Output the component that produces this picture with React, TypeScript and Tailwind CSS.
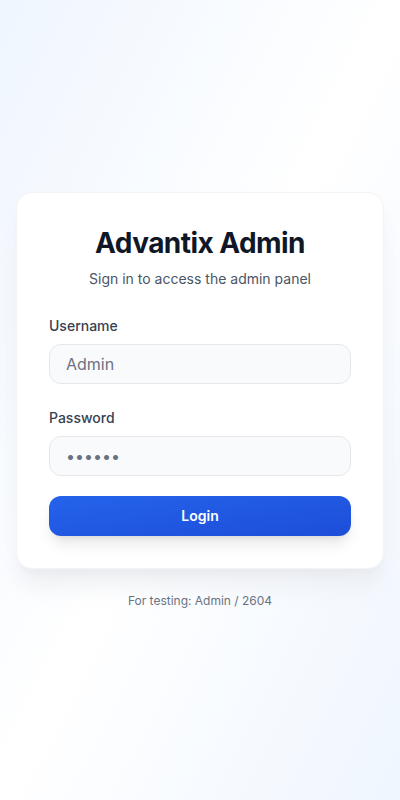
export default function App() {
  return (
    <div
      className="min-h-screen flex flex-col items-center justify-center bg-gradient-to-br from-blue-50 via-white to-blue-50 px-4"
      style={{ fontFamily: "Inter, 'Noto Sans', sans-serif" }}
    >
      {/* Card */}
      <div className="w-full bg-white rounded-2xl border border-gray-100 shadow-xl shadow-gray-200/70 p-8">
        <div className="text-center mb-[27px]">
          <h1 className="text-[28px] leading-9 font-bold text-gray-900 tracking-[-0.02em]">Advantix Admin</h1>
          <p className="mt-2 text-sm text-gray-600">Sign in to access the admin panel</p>
        </div>

        <form onSubmit={(e) => e.preventDefault()}>
          <div className="mb-6">
            <label className="block text-sm font-medium text-gray-700 mb-2">Username</label>
            <input
              type="text"
              placeholder="Admin"
              className="w-full h-10 px-4 rounded-xl bg-gray-50 border border-gray-200 text-base text-gray-900 placeholder:text-gray-500 outline-none"
            />
          </div>
          <div className="mb-5">
            <label className="block text-sm font-medium text-gray-700 mb-2">Password</label>
            <input
              type="password"
              placeholder="••••••"
              className="w-full h-10 px-4 rounded-xl bg-gray-50 border border-gray-200 text-base text-gray-900 placeholder:text-gray-500 outline-none"
            />
          </div>
          <button
            type="submit"
            className="w-full h-10 rounded-xl bg-gradient-to-br from-[#2563eb] to-[#1d4ed8] text-white font-semibold text-sm shadow-lg"
          >
            Login
          </button>
        </form>
      </div>

      <p className="mt-6 text-xs text-gray-500">For testing: Admin / 2604</p>
    </div>
  );
}
